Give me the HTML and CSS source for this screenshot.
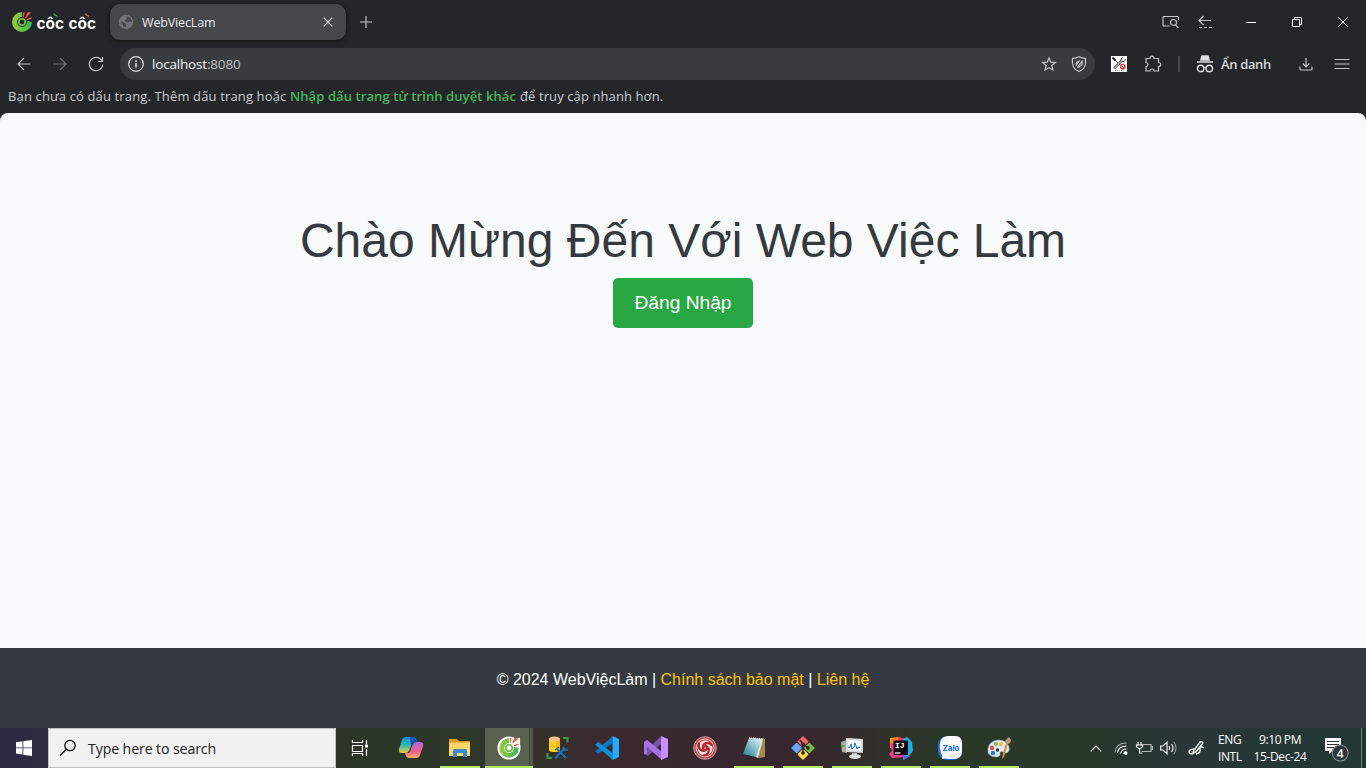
FILE: index.html
```html
<!DOCTYPE html>
<html lang="vi">
<head>
<meta charset="utf-8">
<title>WebViecLam</title>
<link rel="stylesheet" href="styles.css">
</head>
<body>
<div class="browser">
  <div class="tabstrip">
    <svg class="brand" width="98" height="44" viewBox="0 0 98 44">
      <defs><linearGradient id="cc" x1="0" x2="1"><stop offset="0" stop-color="#9ccb3b"/><stop offset="1" stop-color="#35b558"/></linearGradient></defs>
      <path d="M22 12a10 10 0 1 0 10 10l-5-1-5-4z" fill="url(#cc)"/>
      <circle cx="22" cy="22" r="4.9" fill="#252629"/><circle cx="22" cy="22" r="3.2" fill="none" stroke="#72bb45" stroke-width="1.7"/>
      <path d="M23.2 12.3l1.700.3-1.300 5-.8-.3zM28 12l3 .4-5.300 6-.8-.5zM31.300 17l.3 1.700-5 1.500v-1z" fill="#f15a3d"/>
      <text class="brand-text" x="36.500" y="28.500" textLength="27.500" lengthAdjust="spacingAndGlyphs">côc</text>
      <text class="brand-text" x="68.500" y="28.500" textLength="27.500" lengthAdjust="spacingAndGlyphs">côc</text>
      <path d="M53.500 14.200q2-.5 1.300 1.600M55.500 15.800q2-.5 1.200 1.300" fill="none" stroke="#35b558" stroke-width="1.300"/>
      <path d="M85 14.200q2-.5 1.300 1.600M87 15.800q2-.5 1.200 1.300" fill="none" stroke="#f15a3d" stroke-width="1.300"/>
    </svg>
    <div class="tab">
      <svg width="16" height="16" viewBox="0 0 16 16"><circle cx="8" cy="8" r="7.200" fill="#717378"/><path d="M8.500 2.500l4 1.300 1.600 4.200-2.700-.6-1.700 1.200-2.500-.8.1-2.200 1.600-.7zM2 7.200l4.700 1.600 1.700 1.700-.7 3.100-2.400-1.100-.7-2.200z" fill="#46474b"/></svg>
      <span class="tab-title">WebViecLam</span>
      <svg class="ln" width="10" height="10" viewBox="0 0 10 10"><path d="M.7.7l8.600 8.600M9.300.7L.7 9.300"/></svg>
    </div>
    <svg class="newtab ln dim" width="12" height="12" viewBox="0 0 12 12"><path d="M6 0v12M0 6h12"/></svg>
    <div class="spacer"></div>
    <div class="cell c34"><svg class="ln dim" width="18" height="14" viewBox="0 0 18 14"><path d="M7.500 11H2Q1 11 1 10V2.500Q1 1.500 2 1.500H15.500Q16.500 1.500 16.500 2.500V5"/><circle cx="11.500" cy="7.500" r="3"/><path d="M13.500 9.800l3 3"/></svg></div>
    <div class="cell c34"><svg class="ln dim" width="14" height="14" viewBox="0 0 14 14"><path d="M13 5.500H1M5.500 1L1 5.500 5.500 10"/><path d="M1 12.500h13" stroke-dasharray="3 2"/></svg></div>
    <div class="window-buttons">
      <div class="cell c46"><svg class="win" width="10" height="10" viewBox="0 0 10 10"><path d="M0 5.500h10"/></svg></div>
      <div class="cell c46"><svg class="win" width="10" height="10" viewBox="0 0 10 10"><path d="M.5 2.500h7v7h-7zM2.500 2.500v-2h7v7h-2"/></svg></div>
      <div class="cell c46"><svg class="win" width="10" height="10" viewBox="0 0 10 10"><path d="M.2.200l9.600 9.600M9.800.200L.2 9.800"/></svg></div>
    </div>
  </div>
  <div class="toolbar">
    <div class="cell c36"><svg class="ln dim" width="14" height="14" viewBox="0 0 14 14"><path d="M13.500 7H1M7 1L1 7l6 6"/></svg></div>
    <div class="cell c36"><svg class="ln off" width="14" height="14" viewBox="0 0 14 14"><path d="M0 7h12.500M7 1l6 6-6 6"/></svg></div>
    <div class="cell c36"><svg class="ln dim" width="16" height="16" viewBox="0 0 16 16"><path d="M14 5A6.700 6.700 0 1 0 14.700 8.500M14.500 1v4.500H10"/></svg></div>
    <div class="omnibox">
      <svg class="ln" width="16" height="16" viewBox="0 0 16 16"><circle cx="8" cy="8" r="7.300"/><path d="M8 7v4.500M8 4.200v1.600" stroke-width="1.600"/></svg>
      <span class="url">localhost<span class="port">:8080</span></span>
      <div class="spacer"></div>
      <svg class="star ln dim" width="14" height="14" viewBox="0 0 14 14"><path d="M7 1l1.700 4.100 4.600.4-3.500 3 1.100 4.500L7 10.600 3.100 13l1.100-4.500-3.500-3 4.600-.4z"/></svg>
      <svg class="ln dim" width="16" height="16" viewBox="0 0 16 16"><path d="M8 .8q3 1.700 6.500 1.500V7.500Q14 13 8 15.500 2 13 1.500 7.500V2.300Q5 2.500 8 .8z"/><path d="M5.200 9Q4.500 5.500 8.200 5L5.200 9zM6.200 11.500l5-6.500Q12 9.500 8.500 10.500L7.300 12" stroke-width="1.200"/></svg>
    </div>
    <svg class="ext" width="16" height="16" viewBox="0 0 16 16"><path fill="#fff" d="M0 0h16v16H0z"/><path d="M4 4l5 5" stroke="#555" stroke-width="1"/><path d="M1.500 1.500l3 3" stroke="#222" stroke-width="2"/><path d="M3 12.500l8-8" stroke="#333" stroke-width="2.400"/><path d="M3 12.500l8-8" stroke="#fff" stroke-width="1"/><path d="M10 4.500q-.8-2 1.700-3M11.500 5.600q2.300.4 3-2.200" stroke="#333" fill="none"/><circle cx="11.800" cy="10.800" r="2.200" fill="#fff" stroke="#f03d42" stroke-width="1.500"/><path d="M10.500 9.500l2.500 2.500" stroke="#f03d42"/><path d="M4 14.700h8" stroke="#777" stroke-width=".8" stroke-dasharray="1 1"/></svg>
    <svg class="puzzle ln dim" width="18" height="18" viewBox="0 0 18 18"><path d="M2 3.500h4q0-2.300 2-2.300t2 2.300h4.500v4q2.200 0 2.200 2t-2.200 2v4.500H10q0-2-2-2t-2 2H2v-4.500q2-.2 2-2t-2-2z"/></svg>
    <div class="divider"></div>
    <svg class="incog" width="18" height="18" viewBox="0 0 18 18"><path d="M4 5.700L5 1.500Q5.300.2 6.500.2h5Q12.700.2 13 1.500l1 4.200zM1 6.200h16v1.600H1z" fill="#dfe0e3"/><circle cx="4.700" cy="13.500" r="3.200" fill="none" stroke="#dfe0e3" stroke-width="1.400"/><circle cx="13.300" cy="13.500" r="3.200" fill="none" stroke="#dfe0e3" stroke-width="1.400"/><path d="M8 13q1-1 2 0" fill="none" stroke="#dfe0e3"/></svg>
    <span class="incog-label">Ẩn danh</span>
    <div class="spacer"></div>
    <svg class="download ln dim" width="14" height="14" viewBox="0 0 14 14"><path d="M7 1v8.500M3.700 6.500L7 9.800l3.300-3.300M1 9.500V12q0 1 1 1h10q1 0 1-1V9.500"/></svg>
    <svg class="menu ln dim" width="16" height="12" viewBox="0 0 16 12"><path d="M.5 1.500h15M.5 6h15M.5 10.500h15"/></svg>
  </div>
  <div class="bookmarks"><span class="bm1">Bạn chưa có dấu trang. Thêm dấu trang hoặc</span><b class="bm2">Nhập dấu trang từ trình duyệt khác</b><span class="bm3">để truy cập nhanh hơn.</span></div>
</div>
<main class="page">
  <section class="hero">
    <h1>Chào Mừng Đến Với Web Việc Làm</h1>
    <a class="login">Đăng Nhập</a>
  </section>
  <footer>© 2024 WebViệcLàm | <a>Chính sách bảo mật</a> | <a>Liên hệ</a></footer>
</main>
<div class="taskbar">
  <div class="start cell"><svg width="16" height="16" viewBox="0 0 16 16" fill="#fff"><path d="M0 2.200l6.500-.9v6.200H0zM7.300 1.200L16 0v7.500H7.300zM0 8.300h6.500v6.200L0 13.600zM7.300 8.300H16V16l-8.700-1.300z"/></svg></div>
  <div class="search"><svg width="18" height="18" viewBox="0 0 18 18" fill="none" stroke="#111" stroke-width="1.300"><circle cx="11" cy="6.500" r="5.200"/><path d="M7.300 10.200L1.200 16.500"/></svg><span>Type here to search</span></div>
  <div class="taskview cell"><svg width="18" height="16" viewBox="0 0 18 16" fill="none" stroke="#fff" stroke-width="1.200"><path d="M1.500 0v2.500h10V0M1.500 5.500h10v6h-10zM1.500 16v-2.500h10V16M15.500 0v4M15.500 9v7"/><path d="M14 4.500h3v3h-3z" fill="#fff" stroke="none"/></svg></div>
  <div class="apps">
    <div class="app"><svg width="24" height="24" viewBox="0 0 24 24"><defs><linearGradient id="cp1" x1="0" y1="0" x2="0" y2="1"><stop stop-color="#168ce4"/><stop offset=".5" stop-color="#2ab9b2"/><stop offset="1" stop-color="#f4cc32"/></linearGradient><linearGradient id="cp2" x1="0" y1="0" x2="0" y2="1"><stop stop-color="#b562e8"/><stop offset=".6" stop-color="#f0608a"/><stop offset="1" stop-color="#ffb06a"/></linearGradient></defs><path d="M7 1h7q3 0 4 5h-3q-2 0-3 4l-2 5q-1 2-4 2H3q-4 0-3-4L3 4q1-3 4-3z" fill="url(#cp1)"/><path d="M17 22h-7q-3 0-4-5h3q2 0 3-4l2-5q1-2 4-2h3q4 0 3 4l-3 9q-1 3-4 3z" fill="url(#cp2)"/><path d="M11 1h3q3 0 4 5h-3q-2 0-3 4z" fill="#1751c9"/></svg></div>
    <div class="app run"><svg width="24" height="24" viewBox="0 0 24 24"><path d="M1 3h8l2 2h11v4H1z" fill="#dc9e12"/><path d="M1 6.500h21V20H1z" fill="#ffd468"/><path d="M5 21v-6q0-2 2-2h10q2 0 2 2v6h-4v-4H9v4z" fill="#368bd3"/></svg></div>
    <div class="app active"><svg width="24" height="24" viewBox="0 0 26 26"><circle cx="13" cy="13" r="12.500" fill="#fff"/><path d="M22 2h3v8h-3z" fill="#fff"/><path d="M13 2.500A10.500 10.500 0 1 0 23.500 13l-5-1-5.500-4z" fill="url(#cc)"/><circle cx="13" cy="13" r="5.300" fill="#fff"/><circle cx="13" cy="13" r="3.600" fill="none" stroke="#72bb45" stroke-width="2"/><path d="M14 2l1.700.3-.7 5-1-.3zM19 2l4 .3-5.500 5.700-1-.7zM23 8l.5 1.700-5 1.500-.3-1.200z" fill="#f15a3d"/></svg></div>
    <div class="app"><svg width="24" height="24" viewBox="0 0 24 24"><path d="M3 3v11q0 2 5.500 2t5.500-2V3z" fill="#ffcb1e"/><path d="M10 5h4v9q0 2-4 2z" fill="#f2b500"/><ellipse cx="8.500" cy="3" rx="5.500" ry="2.500" fill="#ffc08a"/><path d="M17 2h4.500v4.500M1.500 17v5H6" fill="none" stroke="#369c43" stroke-width="2.200"/><path d="M10 21l9-9M11 13l9 9" stroke="#1573c5" stroke-width="1.800"/><path d="M9 14l4-3M17 11l1 3 4 0M9 22l3-1" stroke="#1573c5" stroke-width="1.500" fill="none"/></svg></div>
    <div class="app"><svg width="24" height="24" viewBox="0 0 24 24"><path d="M17.500 0L24 3v18l-6.500 3z" fill="#27a9f3"/><path d="M18 0v6.500L3.500 18 0 15.500z" fill="#0878c5"/><path d="M18 24v-6.500L3.500 6 0 8.500z" fill="#138dd8"/></svg></div>
    <div class="app"><svg width="24" height="24" viewBox="0 0 24 24"><path d="M0 6l3-2 5 5 9-9v8L4 20l-4-2z" fill="#7752ad"/><path d="M0 18V6l3-2 15 12v8L3 11v7z" fill="#a372e5"/><path d="M17 0l7 3v18l-7 3z" fill="#c98eff"/></svg></div>
    <div class="app"><svg width="24" height="24" viewBox="0 0 24 24"><circle cx="12" cy="12" r="11.300" fill="#c5454a" stroke="#b9a3a5"/><circle cx="12" cy="12" r="9" fill="none" stroke="#e5c9ca"/><circle cx="12" cy="12" r="7.500" fill="#f2e9e8"/><g fill="none" stroke="#c0272f" stroke-width="2.300"><circle cx="12" cy="12" r="2"/><path d="M10 11q0-4 5-4 3 0 4 3"/><path d="M10 11q0-4 5-4 3 0 4 3" transform="rotate(120 12 12)"/><path d="M10 11q0-4 5-4 3 0 4 3" transform="rotate(240 12 12)"/></g></svg></div>
    <div class="app run"><svg width="24" height="24" viewBox="0 0 24 24"><defs><linearGradient id="np" x1="1" x2="0" y2="1"><stop stop-color="#e5f6f6"/><stop offset=".5" stop-color="#83bcc8"/><stop offset="1" stop-color="#1e7a92"/></linearGradient></defs><path d="M20 2l3 1v18l-7 1z" fill="#a18958"/><path d="M7 2l14 1-5 19-2-1z" fill="#e9e6da"/><path d="M7 2l13 1-6 18L1 18z" fill="url(#np)"/><path d="M7 2l14 1" stroke="#ddd" stroke-width="1.500" stroke-dasharray="1 1"/></svg></div>
    <div class="app run"><svg width="24" height="24" viewBox="0 0 24 24"><g transform="rotate(45 12 12)"><rect x="3.500" y="3.500" width="8" height="8" rx=".8" fill="#f46767"/><rect x="12.500" y="3.500" width="8" height="8" rx=".8" fill="#72bd48"/><rect x="3.500" y="12.500" width="8" height="8" rx=".8" fill="#69a5fa"/><rect x="12.500" y="12.500" width="8" height="8" rx=".8" fill="#ffd950"/></g><path d="M9 4l3 4v10M12 8l5 4" fill="none" stroke="#2d2027" stroke-width="1.500"/><circle cx="12" cy="8" r="1.800" fill="#2d2027"/><circle cx="17" cy="12" r="1.800" fill="#2d2027"/><circle cx="12" cy="17" r="1.800" fill="#2d2027"/></svg></div>
    <div class="app run"><svg width="24" height="24" viewBox="0 0 24 24"><path d="M1 6l6-2v13l-5-1z" fill="#aaa"/><path d="M1 9h4v2H1z" fill="#54a55e"/><path d="M6 2l17 1v14L6 16z" fill="#d9dadb"/><path d="M8 4l13 .7V15L8 14z" fill="#f4f9ff"/><path d="M8 12l2-1 1-3 1 5 2-2 1-4 2 6 1-2 2 1" fill="none" stroke="#1b76b8"/><path d="M12 17h5v2h-5z" fill="#aaa"/><ellipse cx="15" cy="20.500" rx="6" ry="2.500" fill="#e0e0e0"/></svg></div>
    <div class="app run"><svg width="24" height="24" viewBox="0 0 24 24"><path d="M1 2l8-1 3 3-2 10-9-2z" fill="#ff8a21"/><path d="M10 1l9 3-6 7-6-3z" fill="#fc3160"/><path d="M14 3l4-2 5 5 1 9-5 6-5 3z" fill="#20aee8"/><path d="M1 8l7-3 8 16-13 1-3-4 3-3z" fill="#f33b93"/><path d="M14 20h7l-6 4z" fill="#5c65e9"/><path d="M4.500 4.500h14.500v14.500H4.500z" fill="#110d12"/><text x="6" y="12" class="ij">IJ</text><path d="M6 17h5.500" stroke="#fff" stroke-width="1.200"/></svg></div>
    <div class="app run"><svg width="24" height="24" viewBox="0 0 24 24"><rect width="24" height="24" rx="9" fill="#1268f3"/><path d="M11 0h6q7 0 7 7v8q0 8-8 8h-5q-4-1-7 0 1-3-1-6Q1 12 2 7q1-7 9-7z" fill="#fff"/><text x="4.500" y="14.500" class="zalo" textLength="17">Zalo</text></svg></div>
    <div class="app run"><svg width="24" height="24" viewBox="0 0 24 24"><path d="M11 4Q2 5 1 13t9 8q4-1 3-4 0-3 5 0 5 0 4-6-2-7-11-7z" fill="#dceaf3" stroke="#a2b7c8" stroke-width=".6"/><circle cx="5" cy="12" r="2.200" fill="#dc5236"/><circle cx="9" cy="8" r="2.100" fill="#83bd48"/><circle cx="14" cy="8" r="2" fill="#e7bf3d"/><circle cx="6" cy="17" r="2.200" fill="#367bbd"/><circle cx="10.500" cy="14" r="1.700" fill="#273332"/><path d="M19 7l2 1-4 13-2 2 1-6z" fill="#e28c2c"/><path d="M18 7q0-3 4-6l2 3q0 3-3 4z" fill="#bf9875"/></svg></div>
  </div>
  <div class="spacer"></div>
  <div class="tray">
    <svg class="chev" width="12" height="7" viewBox="0 0 12 7"><path d="M.7 6.300L6 1l5.300 5.300"/></svg>
    <svg width="14" height="14" viewBox="0 0 14 14"><path d="M1 11.500Q2 2 12.500 2" opacity=".6"/><path d="M3.500 12Q4.500 5 12.500 5M6.500 12.500q1-4.500 6-4.500M9.500 13q.7-2.500 3-2.500"/><circle cx="11.800" cy="12.300" r="1.200" fill="#fff"/></svg>
    <svg width="17" height="12" viewBox="0 0 17 12"><path d="M6.500 2.500H15v7H5.500M15 4.500h1.500v3H15" opacity=".65"/><path d="M2 0v3M5 0v3M.5 3h6v1.500q-1 2-3 2t-3-2zM3.500 6.500V11H6"/></svg>
    <svg width="17" height="14" viewBox="0 0 17 14"><path d="M.7 5H3l4-4v12L3 9H.7zM9 5q1.500 2 0 4M11.500 3q3 4 0 8"/><path d="M14 1q4 6 0 12" opacity=".5"/></svg>
    <svg width="17" height="16" viewBox="0 0 17 16"><path d="M6 13q-4 2-5-1 0-3 6-3l5-7q2-1 3 1l-7 9-3 1 1-3M8 14q5-1 4-5t4-1" stroke-width="1.400"/></svg>
    <div class="lang"><span>ENG</span><span>INTL</span></div>
    <div class="clock"><span>9:10 PM</span><span>15-Dec-24</span></div>
    <svg class="notif" width="26" height="28" viewBox="0 0 26 28"><path d="M1 4h16v13H8l-3 3v-3H1z" fill="#fff" stroke="none"/><path d="M3 7.500h12M3 10.500h12M3 13.500h8" stroke="#253531"/><circle cx="16.200" cy="19" r="8" fill="#303837" stroke="#899390"/><text x="12.700" y="23.500" class="count">4</text></svg>
  </div>
  <div class="desktop"></div>
</div>
</body>
</html>
```

FILE: styles.css
```css
* { box-sizing: border-box; }
body { margin: 0; width: 1366px; height: 768px; overflow: hidden; background: #252629; font-family: "Open Sans", "Noto Sans", sans-serif; display: flex; flex-direction: column; }
svg { display: block; flex: none; overflow: visible; }
.spacer { flex: 1; }
.cell { display: flex; align-items: center; justify-content: center; flex: none; }
.ln { fill: none; stroke: #dedfe2; stroke-width: 1.2; }
.dim { stroke: #c4c5c8; }
.off { stroke: #737477; }
.win { fill: none; stroke: #fff; stroke-width: 1; }
.c34 { width: 34px; } .c36 { width: 36px; } .c46 { width: 46px; }

.browser { height: 113px; flex: none; color: #d6d7da; white-space: nowrap; }
.tabstrip { height: 44px; display: flex; align-items: center; }
.brand-text { font: 700 15.5px Inter, sans-serif; fill: #fff; }
.tab { width: 236px; height: 36px; margin-left: 12px; border-radius: 10px; background: #46474b; box-shadow: 0 1px 4px #111; display: flex; align-items: center; padding: 0 13px 0 8px; }
.tab-title { flex: 1; margin-left: 8px; font-size: 12.5px; letter-spacing: -.15px; color: #e8e9eb; }
.newtab { margin-left: 14px; }
.window-buttons { display: flex; margin-left: 6px; }
.toolbar { height: 40px; display: flex; align-items: center; padding-left: 6px; }
.omnibox { width: 975px; height: 32px; margin-left: 6px; border-radius: 16px; background: #3a3b3f; display: flex; align-items: center; padding: 0 8px; }
.url { margin-left: 8px; font-size: 13.5px; letter-spacing: -.18px; color: #f2f2f3; }
.port { color: #bfc0c3; }
.star { margin-right: 15px; }
.ext { margin-left: 16px; }
.puzzle { margin-left: 17px; }
.divider { width: 2px; height: 16px; margin-left: 16px; background: #4a4b4e; }
.incog { margin-left: 16px; }
.incog-label { margin-left: 7px; font-size: 13px; font-weight: 600; letter-spacing: -.35px; }
.download { margin-right: 21px; }
.menu { margin-right: 16px; }
.bookmarks { height: 23px; display: flex; padding: 0 8px; align-items: center; gap: 4px; font-size: 13px; line-height: 20px; color: #cbccd0; }
.bm1 { width: 278px; letter-spacing: .14px; }
.bm2 { width: 226px; letter-spacing: .09px; color: #45b65d; font-weight: 600; }
.bm3 { letter-spacing: .1px; }

.page { height: 615px; flex: none; background: #f8f9fa; border-radius: 8px 8px 0 0; overflow: hidden; display: flex; flex-direction: column; font-family: "Liberation Sans", Arial, sans-serif; }
.hero { flex: 1; display: flex; flex-direction: column; align-items: center; padding-top: 99px; }
h1 { margin: 0 0 8px; font-weight: 400; font-size: 48px; line-height: 58px; color: #343a40; white-space: nowrap; }
.login { width: 140px; height: 50px; border-radius: 5px; background: #28a745; color: #fff; font-size: 19.2px; line-height: 50px; text-align: center; }
footer { height: 80px; background: #343a40; color: #fff; font-size: 16px; line-height: 24px; padding-top: 20px; text-align: center; }
footer a { color: #ffc107; }

.taskbar { height: 40px; flex: none; display: flex; background: linear-gradient(90deg, #2c2a40 0, #302c40 48px, #2b3629 336px, #2d372a 480px, #35302b 550px, #3c2930 620px, #37272f 800px, #332e2a 865px, #2a3828 940px, #28382b 1100px, #2b3538 1190px, #253735 1260px, #223733 1366px); color: #fff; }
.start { width: 48px; }
.search { width: 288px; background: #f1f1f1; border: 1px solid #c3c3c3; display: flex; align-items: center; padding-left: 10px; font-size: 14.2px; letter-spacing: -.13px; color: #222; }
.search span { margin-left: 11px; }
.taskview { width: 48px; }
.apps { display: flex; padding-left: 2px; }
.app { width: 49px; height: 40px; display: flex; align-items: center; justify-content: center; border-bottom: 2px solid transparent; padding-top: 2px; }
.run { width: 40px; margin: 0 4.5px; border-color: #b5eb68; }
.active { width: 48px; margin: 0 .5px; border-color: #b5eb68; background: linear-gradient(90deg, #59614f 44px, #3e4538 44px, #3e4538 45px, #51584a 45px); }
.ij { font: 700 8px "Liberation Mono", monospace; fill: #fff; }
.zalo { font: 700 8px Inter, sans-serif; fill: #126bf1; }
.tray { display: flex; align-items: center; font-size: 12px; line-height: 17px; white-space: nowrap; }
.tray svg { fill: none; stroke: #fff; stroke-width: 1.1; }
.tray svg:nth-child(2) { margin-left: 12px; }
.tray svg:nth-child(3) { margin-left: 8px; }
.tray svg:nth-child(4) { margin-left: 7px; }
.tray svg:nth-child(5) { margin-left: 11px; }
.lang, .clock { display: flex; flex-direction: column; }
.lang { width: 24px; margin-left: 13px; letter-spacing: -.4px; }
.clock { width: 56px; margin-left: 10px; align-items: center; letter-spacing: -.4px; }
.tray .notif { margin-left: 16px; }
.tray .count { font: 600 12px "Open Sans", sans-serif; fill: #fff; stroke: none; }
.desktop { width: 5px; margin-left: 11px; border-left: 1px solid #77827e; }
```
